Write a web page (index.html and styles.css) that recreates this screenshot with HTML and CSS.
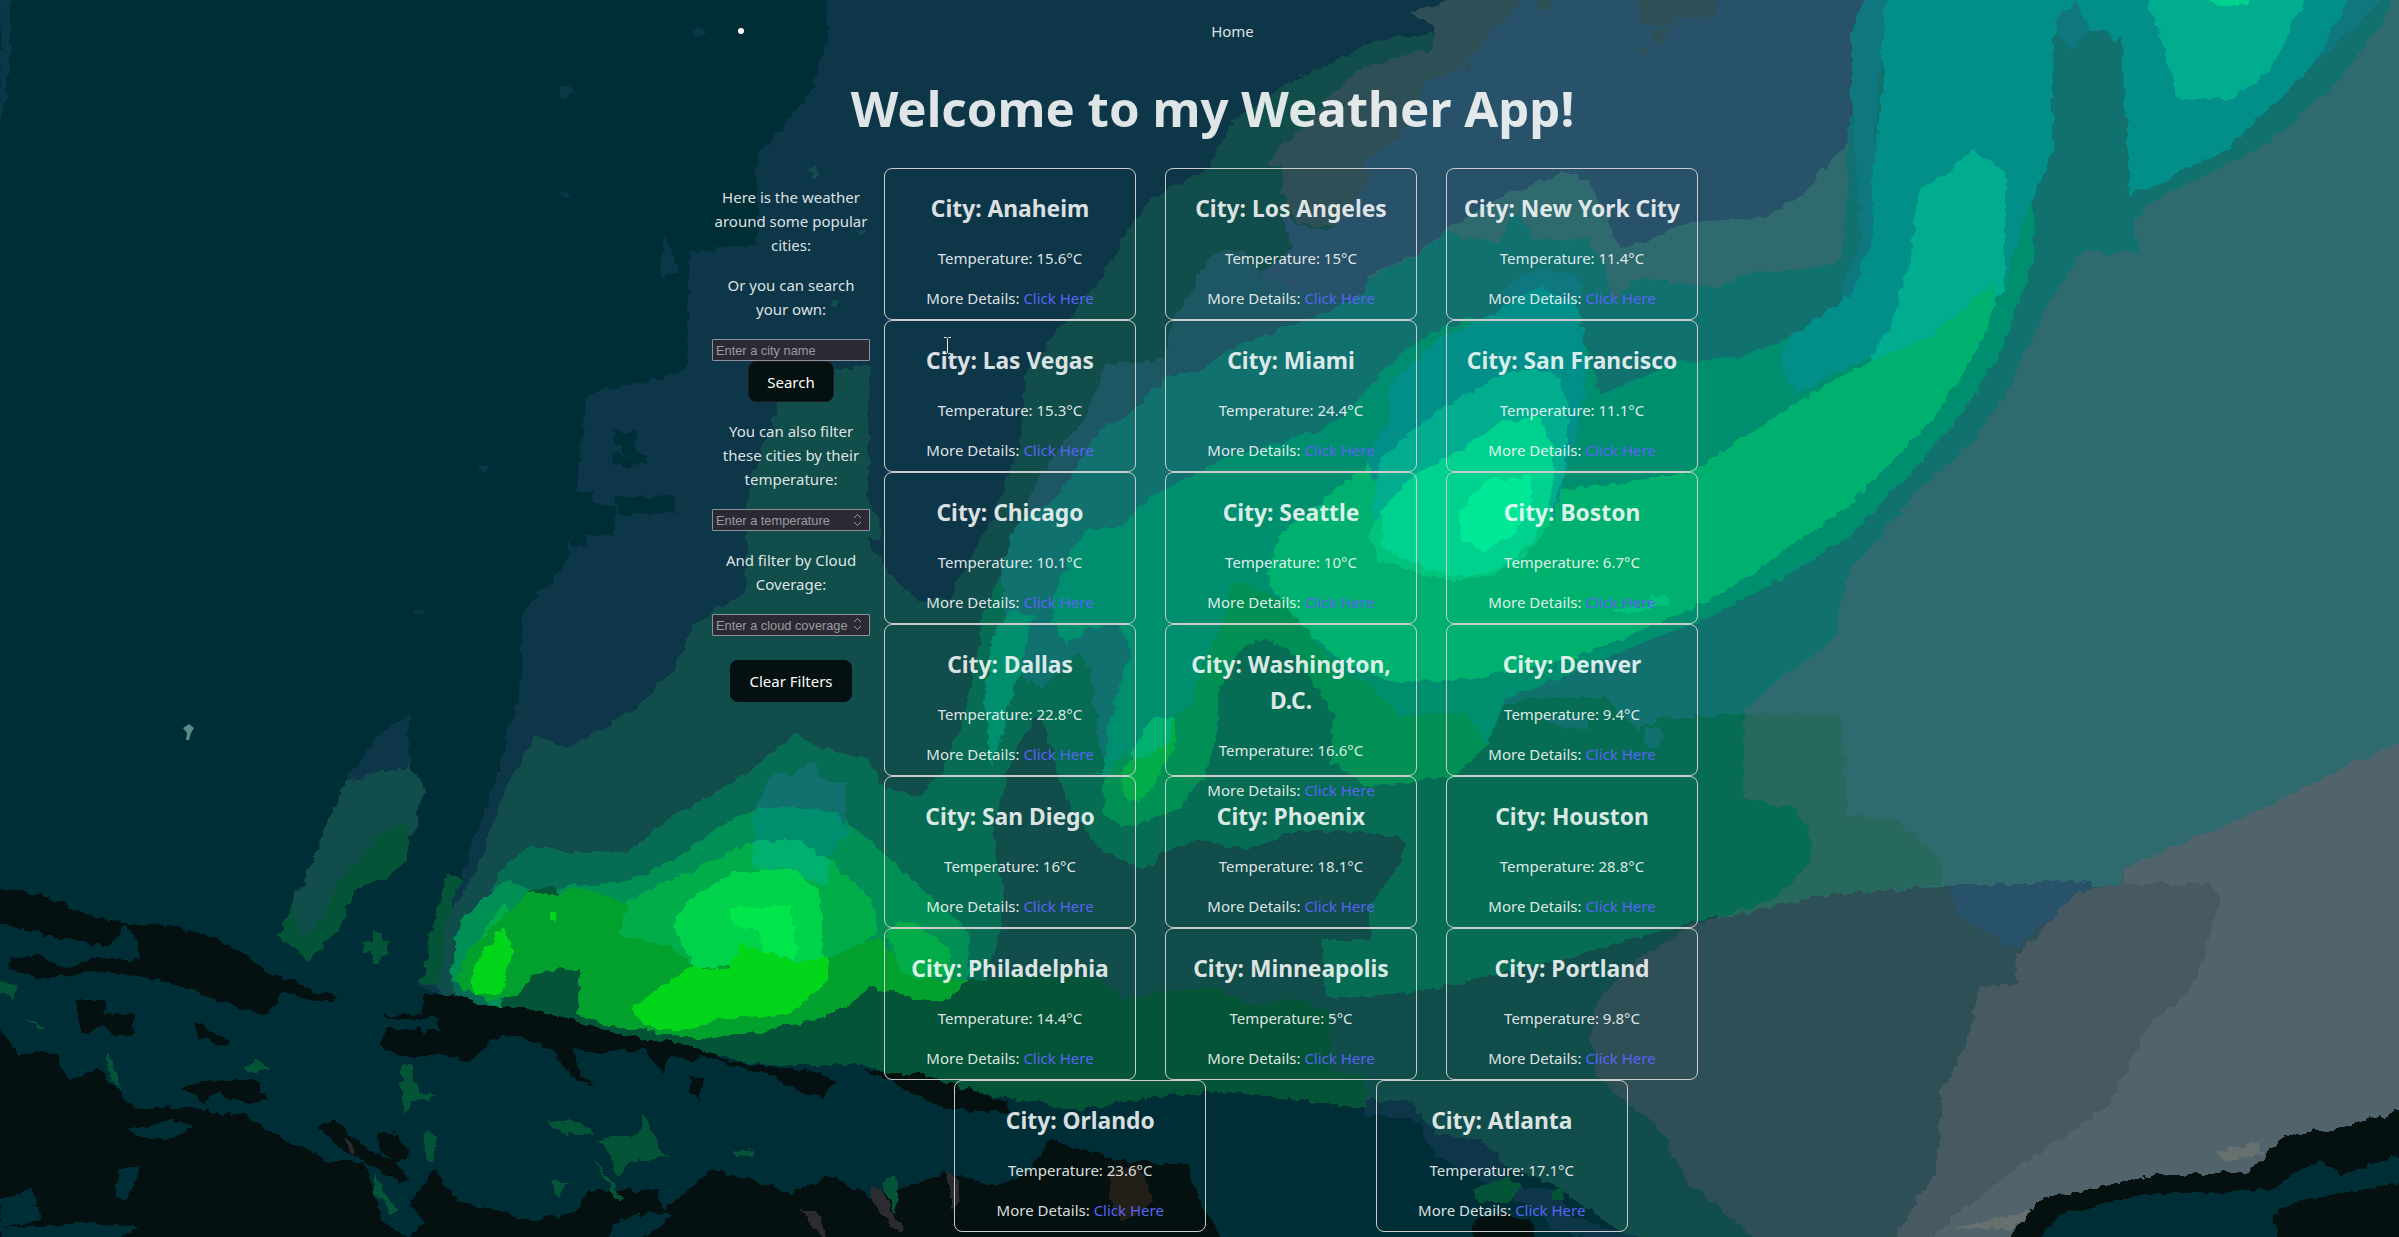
FILE: index.html
```html
<!DOCTYPE html>
<html lang="en">
<head>
<meta charset="utf-8">
<title>Weather App</title>
<link rel="stylesheet" href="styles.css">
</head>
<body>
<svg class="aurora" viewBox="0 0 2399 1237" preserveAspectRatio="none" aria-hidden="true">
  <defs>
    <filter id="rough" filterUnits="userSpaceOnUse" x="-20" y="-20" width="2440" height="1280" color-interpolation-filters="sRGB">
      <feTurbulence type="fractalNoise" baseFrequency="0.09" numOctaves="2" seed="4"/>
      <feDisplacementMap in="SourceGraphic" scale="10" xChannelSelector="R" yChannelSelector="G"/>
    </filter>
  </defs>
  <g filter="url(#rough)" shape-rendering="crispEdges">
    <rect class="c-night" x="-20" y="-20" width="2440" height="1280"/>
    <!-- night sky -->
    <path class="c-navy" d="M830-20L824 50 814 87 757 158V245L689 252 687 371 587 394 580 458 568 560 522 615V678L496 781 461 876 438 939 419 986 600 1260H2420V-20Z"/>
    <path class="c-navy" d="M0 0h10v60l-8 60h-2zM698 32m-6 0a6 6 0 1 0 12 0a6 6 0 1 0-12 0M565 92m-6 0a6 6 0 1 0 12 0a6 6 0 1 0-12 0M564 193m-5 0a5 5 0 1 0 10 0M420 610m-5 0a5 5 0 1 0 10 0M484 465m-5 0a5 5 0 1 0 10 0M344 785l30-45 35-25v90l-40 5-45 60zM660 270l5-38 15 40-20 4z"/>
    <path class="c-night" d="M615 432h20v12h-20zM612 455h36v10h-36zM572 490h22v14h20v32h-28v10h-14zM616 496h60v18h-60zM622 444h14v10h-14z"/>
    <!-- outer veil -->
    <path class="c-pine" d="M870 365L790 372 770 430 748 490 746 592 696 623 673 670 635 710 566 749 536 734 505 789 474 876 448 915 429 978 600 1200H1700V-20L1435 30 1360 43 1320 67 1290 83 1230 123 1210 167 1153 197 1127 230 1103 277 1073 313 1047 343 1027 370 1020 443 992 520 963 570 950 597 920 602 907 593 884 567 880 520 868 500Z"/>
    <path class="c-navy" d="M868 478l18-6v18l-16 6zM868 537l14 4v14l-12-2zM1435 33L1380 38 1320 68V-20H1450Z"/>
    <path class="c-pine" d="M344 782L408 765 424 786 415 830 389 864 357 888 338 929 309 960 277 935 293 905 319 847ZM809 168h7l-2 12zM858 229a4 4 0 1 0 8 0zM832 300h8v8h-8z"/>
    <path class="c-forest" d="M408 825V860L385 880 357 888 338 929 309 960 277 935 293 905 300 935 315 930 340 880 385 830ZM448 870L430 940 420 985 440 985 445 930 460 880ZM372 932h8v8h8v14h-8v10h-8v-12h-8v-10h8z"/>
    <path class="c-slate-gray" d="M1447-20V0L1410 13 1435 27 1433 48 1410 53 1355 70 1337 90 1300 130 1265 163 1283 167V193L1297 225 1337 225 1700 225V-20Z"/>
    <path class="c-slate" d="M1535-20L1513 10 1487 37 1453 73 1427 80 1400 137 1360 163 1373 177 1350 207 1333 227H1300L1280 213 1293 247 1263 273 1300 400H1900V-20Z"/>
    <path class="c-slate-gray" d="M1638-20V25H1675V17H1715L1727-20ZM1650 30h17v12h-15zM1639 47h7v8h-7zM1465 65h8v6h-8zM1482 68h5v4zM1534-20h16v28h-14z"/>
    <path class="c-steel" d="M1242 250H1217L1197 275V285L1177 313 1163 360 1107 363 1087 413 1040 473 1023 515 1100 560 1420 380 1350 300 1290 290 1262 275Z"/>
    <path class="c-sea" d="M1820 170L1807 190 1767 217 1683 223 1650 240 1620 248 1607 220 1587 180 1563 172 1527 187 1500 197 1460 220 1417 253 1367 277 1500 500V1260H2420V-20H2300L1860 130Z"/>
    <path class="c-teal" d="M1053 500L1013 527 1007 553 993 600 985 650 1110 770 1200 780 1743 730V710L1773 686 1835 639 1850 568 1873 544 1919 489 1972 442 2010 387 2041 316 2087 245 2110 256 2148 205 2217 170 2270 142 2332 87 2385 20 2399-20H1873L1850 118 1842 260 1820 267 1747 273 1717 287 1640 278 1613 300 1603 267 1587 240H1533L1517 213 1503 227 1501 243 1467 240 1447 230 1420 253 1370 277 1363 293 1327 313 1277 330 1233 347 1200 370 1165 377 1133 410 1097 433 1067 483Z"/>
    <!-- broad green curtain -->
    <path class="c-moss" d="M1503 707L1530 697H1606L1637 730 1664 718 1744 714V798L1797 810 1813 844 1809 864 1775 898 1721 917 1644 936 1568 959 1445 986 1400 994 1327 998 1321 940H1369V906L1403 860V837L1350 831H1293L1247 850 1197 840 1163 853 1153 867H1137L1103 850 1077 820 1063 790 1045 725 1036 715 1020 740 1003 787 992 833 1003 893 1000 933 983 983 960 1020 800 1060H560L452 990 459 947 497 876 528 844 559 852 628 852 666 820 735 781 796 734 820 747 870 760 883 787 920 797 940 773 960 730 973 683 983 617 1000 577 1012 640 1040 690 1080 650 1095 680 1140 800 1220 700H1500Z"/>
    <path class="c-teal" d="M1005 580L1060 600 1087 632 1120 618 1132 640 1120 680 1105 770 1098 740 1090 660 1080 645 1060 662 1030 680 1005 660ZM1642 735l10-10 14 8-6 14h-12zM1540 715l20 12h30l-4-10z"/>
    <path class="c-pine" d="M1250 938H1321V960L1327 998 1400 994 1445 986 1568 959 1644 936 1720 915 1760 1260H1500L1420 1150H1300L1250 1000Z"/>
    <path class="c-fern" d="M1744 714H1841L1847 814 1896 820 1942 860V884L1812 899 1721 917 1775 898 1809 864 1813 844 1797 810 1744 798Z"/>
    <path class="c-slate-gray" d="M1697 923L1812 897 1965 884 2120 887 2420 870V1260H1781L1689 1183 1659 1128 1621 1097 1598 1078 1591 1036 1598 1001 1637 959Z"/>
    <path class="c-slate" d="M1949 887L2095 880 2090 905 2041 925 2018 950 1957 915Z"/>
    <path class="c-stone" d="M2420 735L2347 765 2271 805 2217 828 2125 868 2121 884 2079 891 2018 955V985L1980 986 1965 1049 1942 1089 1938 1168 1880 1260H2420Z"/>
    <path class="c-ash" d="M2420 735L2347 765 2271 805 2217 828 2125 868V884H2209L2220 900 2194 986 2148 1026 2110 1104 2018 1168 1900 1260H2420Z"/>
    <path class="c-jade" d="M1053 600L1073 550 1087 528 1120 527 1147 500 1183 480 1227 457 1280 443 1320 430 1340 417 1367 390 1397 357 1430 333 1473 317 1587 347 1600 393 1637 380 1673 363 1740 357 1780 343 1820 320 1873 347 2003 284 2011 158 2034 213V260L2003 347 1965 410 1911 473 1850 536 1773 584 1697 623 1644 642 1576 672 1507 699 1488 745 1400 760 1230 720 1170 740 1120 780 1100 777 1113 707 1132 650 1117 623 1087 630 1067 645 1053 623ZM993 633L1010 610 1033 617 1020 667 1003 733 990 767 985 700Z"/>
    <path class="c-cyan" d="M1873-20L1884 79 1865 237 1842 300 1789 339 1780 365 1796 394 1860 360 1934 335 2003 292 2020 230 2053 150V40L2070 10 2095 40 2122 40 2129 197 2225 150 2309 71 2372-20Z"/>
    <path class="c-teal" d="M2053 60L2068 30H2105L2122 50 2126 200 2140 252H2087L2053 197Z"/>
    <path class="c-lagoon" d="M1870-20L1850 40 1852 110 1862 240 1842 290 1850 300 1870 245 1878 90 1888-20ZM2055 20l20-20 14 30-20 20zM2309 71L2399-20H2360ZM1876 448h16v14l-12 6-8-10z"/>
    <path class="c-mint" d="M1972 150L2007 174 2003 292 1934 335 1888 379 1870 355 1888 331 1911 260 1919 189 1950 170ZM2142-20L2179 99H2232L2271 71 2315-20Z"/>
    <path class="c-spring" d="M2208-20h40v26h-36z"/>
    <path class="c-emerald" d="M1280 536L1338 489 1376 458 1567 489 1689 473 1773 418 1850 371 1934 335 1995 280 1988 331 1934 418 1850 505 1773 560 1697 607 1582 655 1483 678 1391 682 1340 660 1300 623 1280 600 1267 573Z"/>
    <path class="c-leaf" d="M1233 580L1277 597 1317 643 1340 670 1369 684 1396 714H1468L1488 745 1453 776 1369 787 1334 764 1207 777 1173 813 1120 828 1103 810V780L1120 760 1170 720 1193 700 1210 647 1227 613Z"/>
    <path class="c-moss" d="M1243 647L1265 640 1287 647 1317 687 1333 713 1330 767 1350 785 1203 785 1215 740 1220 687Z"/>
    <path class="c-grass" d="M1123 767L1153 730 1175 717V740L1153 790 1137 803 1122 793Z"/>
    <path class="c-emerald" d="M1130 755L1153 717H1173L1170 740 1147 758Z"/>
    <!-- bright core -->
    <path class="c-cyan" d="M1443 337L1500 310 1540 280H1560L1577 300 1583 333 1587 377 1577 433 1563 483 1553 520 1400 520 1370 470V450L1390 420V383Z"/>
    <path class="c-mint" d="M1380 460L1413 430 1460 397 1513 370H1553L1567 400V460L1550 520 1500 545 1372 520Z"/>
    <path class="c-spring-dim" d="M1369 538L1380 510 1413 477 1553 483 1548 525 1530 555 1499 573 1453 582 1380 561Z"/>
    <path class="c-spring" d="M1380 510L1413 477 1460 450 1500 423 1540 417 1553 450V483L1545 519 1530 546 1499 569 1461 577 1430 569 1384 550Z"/>
    <path class="c-core" d="M1457 513L1487 480 1530 477 1533 500 1518 531 1484 552 1461 538Z"/>
    <path class="c-spring-dim" d="M1615 608l35-2v-10h20v8l-35 8h-20z"/>
    <path class="c-lagoon" d="M1503 290l30-22 44 8 6 16-12 10-30-15-30 12z"/>
    <!-- low glow over the ridge -->
    <path class="c-leaf" d="M450 980L459 923 490 890 510 880 536 892 574 885 625 882 676 858 714 830 753 810 797 806 836 813 880 851 925 892 967 927 970 950 967 980 930 1000 700 1050 560 1040Z"/>
    <path class="c-teal" d="M772 772L790 775 812 762 822 780 845 782V830L800 805 755 812Z"/>
    <path class="c-jade" d="M753 810L797 806 836 813 850 832 825 860 790 840 755 842Z"/>
    <path class="c-forest" d="M529 892L555 885 580 960 700 1000 880 980 983 980 1007 975 1100 978 1120 1000 1163 993 1213 987 1253 1007 1300 998 1331 1013V1070L1365 1074V1120H900L606 1035 500 1005 520 950Z"/>
    <path class="c-grass" d="M619 905L682 875 753 842 797 839 829 861 874 902 877 933 829 970 670 970 619 936ZM480 935L504 902 513 930 480 970Z"/>
    <path class="c-emerald" d="M753 842L797 839 829 861 825 885 790 870 755 870Z"/>
    <path class="c-green" d="M466 953L500 920 529 893 555 895 577 888 628 904 619 933 670 947 695 965 829 957 880 936 899 964 937 980H967L953 997 933 1003 870 987 847 1007 820 1018 765 1032 695 1039 606 1025 577 1015 580 971 561 969 529 977 520 995 485 1001 456 984Z"/>
    <path class="c-grass" d="M887 933L900 920 920 927 950 950 953 975 920 978 900 972Z"/>
    <path class="c-neon" d="M695 968L673 926 689 899 733 873 797 870 820 892 824 960Z"/>
    <path class="c-neon-hot" d="M730 909L791 904 797 959 765 953 759 929 733 926Z"/>
    <path class="c-lime" d="M692 967L727 969 743 943 765 953 797 961 828 957V981L791 1013 721 1019 689 1029H647L631 1008ZM472 967L504 926 513 950 501 995H472ZM551 912h6v10h-6z"/>
    <!-- mountains -->
    <path class="c-night" d="M-20 900L230 950 330 985 417 986 470 1005 530 1010 620 1035 765 1065H860L1008 1098 1079 1110 1162 1096 1227 1092 1300 1100 1365 1108 1415 1118 1436 1156 1500 1165 1552 1183 1660 1260H-20Z"/>
    <path class="c-navy" d="M1365 1100L1410 1102 1430 1125 1436 1134 1480 1140 1502 1158 1505 1185 1560 1190 1568 1215 1660 1245 1700 1260H1640L1560 1230 1500 1190 1436 1156 1415 1118 1365 1115Z"/>
    <path class="c-forest" d="M1470 1190l40-12 12 8-14 18-34-4zM1550 1190h14v10h-14z"/>
    <path class="c-soil" d="M-20 889L25 891 60 903 99 919 130 924 168 925 205 935 240 950 268 972 300 985 342 1000 315 1002 285 992 268 1014 242 1010 205 995 170 982 130 975 96 969 64 976 38 979 8 969 12 957 38 956 66 968 96 958 140 960V940L125 926 112 944 92 944 57 936 6 926-20 924Z"/>
    <path class="c-soil" d="M75 1000h30v14h28v22h-20l-6-10-24 10zM424 995L453 993 485 1005 523 1007 574 1021 619 1034 689 1045 721 1058 765 1067 805 1070 835 1080 825 1098 800 1092 775 1077 735 1067 718 1060 700 1056 692 1060 670 1056 662 1072 645 1050 620 1050 600 1054 574 1048 578 1070 592 1086 568 1077 555 1050 510 1034 490 1040 470 1062 450 1055 400 1056 380 1044 385 1029 420 1028 415 1020 376 1017 421 1014ZM864 1069L931 1077 1008 1102 1010 1114 940 1107ZM180 1089L205 1080 255 1082 268 1099 250 1106 235 1098 215 1108 200 1100ZM690 1075l14 4-4 22-10-8zM196 1022l14 8 18 12-8 4-22-10z"/>
    <path class="c-soil" d="M-20 1025L0 1029 19 1054 57 1053 70 1082 96 1066 134 1108H204L242 1114 287 1142 332 1162H363L383 1197 408 1207 434 1169 459 1203 497 1210 529 1221 574 1214 587 1190 657 1190 663 1210 714 1169 791 1193 829 1176 874 1200 944 1173 995 1186 1030 1170 1050 1140 1118 1160 1189 1165 1200 1201 1235 1260H-20ZM315 1125L335 1120 360 1145 395 1162 410 1178 400 1182 370 1165 340 1148ZM378 1133l22 2 8 20-12 8-16-12z"/>
    <path class="c-night" d="M130 1128l40-8 22 6-20 14-35-2zM120 1170l20-4-12 35-14-6zM0 1200l32-12 8 32-40 8zM0 1228l80-6 60 6-20 10-120 4zM610 1225l40-14 22 5-40 30h-20zM205 1100l14-8 14 10-8 14-16-4zM365 1165l20 10 30 34 10 14-16 14-24-12-14-40zM415 1020l20-5 8 12-20 6z"/>
    <path class="c-forest" d="M400 1070l12-8 4 26 20 10-24 2-8 18zM545 1120l35 2 16 12h-30zM598 1140l40-5 6-22 14 30 10 14-40 6-10 14-6-20zM104 1052l10 10 6 28-10-14zM425 1130l14 8-6 22-8-4zM243 1068l12-8 16 10-16 2zM375 1175l12 20 12 15-8 4-18-25zM593 1155l30 45-8-2zM550 1182h16l-6 18zM735 1150h18v6h-18zM0 980l18 6-4 12-14-4zM883 1180l12-5 3 25-4 14-6-20zM22 1013l22 16-8-2z"/>
    <path class="c-plum" d="M870 1185l14 4 8 24 14 16-6 4-28-28zM945 1172l12 6 4 22-8 10zM800 1208l18 5 12 30-20-18zM342 1132l14 18-4 4z"/>
    <path class="c-umber" d="M1110 1170l30-5 14 36-30 22-15-24z"/>
    <path class="c-rock" d="M1970 1225l80-20-40 25h-60zM2215 1152l42-10 6 10-34 12z"/>
    <path class="c-soil" d="M1480 1260L1470 1222 1500 1212 1530 1220 1545 1260ZM2000 1250L2041 1199 2156 1175 2248 1171 2286 1136 2339 1128 2420 1105V1260Z"/>
    <path class="c-night" d="M2060 1215L2140 1195 2270 1190 2320 1160 2340 1175 2420 1150V1180L2300 1200 2270 1215 2290 1260H2020Z"/>
  </g>
  <path class="c-star" d="M183 728l6-4 5 4-3 5-2 7h-3l1-7z"/>
</svg>

<svg class="ibeam" viewBox="0 0 9 17" aria-hidden="true"><path d="M1 .5h2.500l1 1 1-1H8M4.500 1.500v14M1 16.500h2.500l1-1 1 1H8"/></svg>

<div class="app">
  <nav><ul><li><a class="nav-link" href="#">Home</a></li></ul></nav>
  <h1>Welcome to my Weather App!</h1>
  <div class="layout">
    <aside>
      <p>Here is the weather around some popular cities:</p>
      <p>Or you can search your own:</p>
      <div class="field"><input type="text" placeholder="Enter a city name"></div>
      <button class="outlined">Search</button>
      <p>You can also filter these cities by their temperature:</p>
      <div class="field"><input type="text" placeholder="Enter a temperature"><svg class="spin" viewBox="0 0 9 12"><path d="M1 4l3.500-3.500L8 4M1 8l3.500 3.500L8 8"/></svg></div>
      <p>And filter by Cloud Coverage:</p>
      <div class="field"><input type="text" placeholder="Enter a cloud coverage"><svg class="spin high" viewBox="0 0 9 12"><path d="M1 4l3.500-3.500L8 4M1 8l3.500 3.500L8 8"/></svg></div>
      <button class="clear">Clear Filters</button>
    </aside>
    <main>
      <section class="card"><h2>City: Anaheim</h2><p>Temperature: 15.6°C</p><p>More Details: <a href="#">Click Here</a></p></section>
      <section class="card"><h2>City: Los Angeles</h2><p>Temperature: 15°C</p><p>More Details: <a href="#">Click Here</a></p></section>
      <section class="card"><h2>City: New York City</h2><p>Temperature: 11.4°C</p><p>More Details: <a href="#">Click Here</a></p></section>
      <section class="card"><h2>City: Las Vegas</h2><p>Temperature: 15.3°C</p><p>More Details: <a href="#">Click Here</a></p></section>
      <section class="card"><h2>City: Miami</h2><p>Temperature: 24.4°C</p><p>More Details: <a href="#">Click Here</a></p></section>
      <section class="card"><h2>City: San Francisco</h2><p>Temperature: 11.1°C</p><p>More Details: <a href="#">Click Here</a></p></section>
      <section class="card"><h2>City: Chicago</h2><p>Temperature: 10.1°C</p><p>More Details: <a href="#">Click Here</a></p></section>
      <section class="card"><h2>City: Seattle</h2><p>Temperature: 10°C</p><p>More Details: <a href="#">Click Here</a></p></section>
      <section class="card"><h2>City: Boston</h2><p>Temperature: 6.7°C</p><p>More Details: <a href="#">Click Here</a></p></section>
      <section class="card"><h2>City: Dallas</h2><p>Temperature: 22.8°C</p><p>More Details: <a href="#">Click Here</a></p></section>
      <section class="card"><h2>City: Washington, D.C.</h2><p>Temperature: 16.6°C</p><p>More Details: <a href="#">Click Here</a></p></section>
      <section class="card"><h2>City: Denver</h2><p>Temperature: 9.4°C</p><p>More Details: <a href="#">Click Here</a></p></section>
      <section class="card"><h2>City: San Diego</h2><p>Temperature: 16°C</p><p>More Details: <a href="#">Click Here</a></p></section>
      <section class="card"><h2>City: Phoenix</h2><p>Temperature: 18.1°C</p><p>More Details: <a href="#">Click Here</a></p></section>
      <section class="card"><h2>City: Houston</h2><p>Temperature: 28.8°C</p><p>More Details: <a href="#">Click Here</a></p></section>
      <section class="card"><h2>City: Philadelphia</h2><p>Temperature: 14.4°C</p><p>More Details: <a href="#">Click Here</a></p></section>
      <section class="card"><h2>City: Minneapolis</h2><p>Temperature: 5°C</p><p>More Details: <a href="#">Click Here</a></p></section>
      <section class="card"><h2>City: Portland</h2><p>Temperature: 9.8°C</p><p>More Details: <a href="#">Click Here</a></p></section>
      <section class="card"><h2>City: Orlando</h2><p>Temperature: 23.6°C</p><p>More Details: <a href="#">Click Here</a></p></section>
      <section class="card"><h2>City: Atlanta</h2><p>Temperature: 17.1°C</p><p>More Details: <a href="#">Click Here</a></p></section>
    </main>
  </div>
</div>
</body>
</html>
```
FILE: styles.css
```css
* { box-sizing: border-box; }

body {
  margin: 0;
  height: 1237px;
  overflow: hidden;
  background: #002e37;
  color: rgba(255, 255, 255, 0.87);
  font: 15px/24px "Noto Sans", "Open Sans", sans-serif;
}

.aurora {
  position: absolute;
  inset: 0;
  width: 2399px;
  height: 1237px;
  z-index: -1;
}

.c-night { fill: #002e37; }
.c-navy { fill: #0d3748; }
.c-pine { fill: #114d4b; }
.c-forest { fill: #045437; }
.c-slate-gray { fill: #2f4f57; }
.c-slate { fill: #285269; }
.c-steel { fill: #1c5763; }
.c-sea { fill: #2e6a6e; }
.c-teal { fill: #10716e; }
.c-moss { fill: #066c53; }
.c-fern { fill: #28695e; }
.c-stone { fill: #485a61; }
.c-ash { fill: #51646b; }
.c-jade { fill: #008f6e; }
.c-cyan { fill: #028e89; }
.c-lagoon { fill: #0f7780; }
.c-mint { fill: #00ad8e; }
.c-emerald { fill: #00b06e; }
.c-leaf { fill: #008f55; }
.c-grass { fill: #00ad49; }
.c-green { fill: #02a12d; }
.c-spring { fill: #00d18e; }
.c-spring-dim { fill: #00c47b; }
.c-core { fill: #00e896; }
.c-neon { fill: #00d24c; }
.c-neon-hot { fill: #00e64b; }
.c-lime { fill: #02d61a; }
.c-soil { fill: #051110; }
.c-plum { fill: #2d2b32; }
.c-umber { fill: #211f17; }
.c-rock { fill: #66706f; }
.c-star { fill: #5d8a8b; }

.ibeam {
  position: absolute;
  left: 943px;
  top: 337px;
  width: 9px;
  height: 17px;
  fill: none;
  stroke: #e8e8e8;
}

.app {
  width: 1001px;
  margin-left: 712px;
  padding-top: 3px;
}

nav ul { margin: 16px 0; padding-left: 40px; text-align: center; }
nav ul { list-style: none; }
nav li { display: flex; align-items: center; }
nav li::before {
  content: "";
  width: 6px;
  height: 6px;
  margin-left: -14px;
  border-radius: 50%;
  background: #fff;
}
.nav-link { flex: 1; margin-left: 8px; color: inherit; }

a { color: #5864f4; text-decoration: none; }

h1 {
  margin: 37px 0 32px;
  font-size: 49.2px;
  line-height: 56px;
  text-align: center;
}

.layout { display: flex; align-items: flex-start; }

aside {
  width: 158px;
  display: flex;
  flex-direction: column;
  align-items: center;
  text-align: center;
}

aside p { margin: 16px 0 0; }
aside p:first-child { margin-top: 17px; }

.field { position: relative; width: 158px; height: 22px; margin: 18px 0 0; }
.field + p { margin-top: 17px; }

input {
  display: block;
  width: 100%;
  height: 22px;
  padding: 1px 3px;
  border: 1px solid #8f8f9d;
  border-radius: 1px;
  background: #2b2a33;
  color: #fff;
  font: 12.8px "Liberation Sans", Arial, sans-serif;
}

input::placeholder { color: #9b9aa2; opacity: 1; }

.spin {
  position: absolute;
  right: 8px;
  top: 5px;
  width: 9px;
  height: 12px;
  fill: none;
  stroke: #a0a0ab;
}
.spin.high { top: 4px; }

button {
  padding: 0 18.5px;
  height: 41px;
  border: 1px solid transparent;
  border-radius: 8px;
  background: #051110;
  color: #fff;
  font: 400 15px/24px "Noto Sans", "Open Sans", sans-serif;
}

.outlined { border-color: #1c1c20; }
.outlined + p { margin-top: 17px; }
.clear { margin-top: 24px; height: 42px; }

main {
  width: 843px;
  display: flex;
  flex-wrap: wrap;
  justify-content: space-around;
}

.card {
  width: 252px;
  height: 152px;
  margin-left: -0.5px;
  margin-right: 0.5px;
  border: 1px solid #ccc;
  border-radius: 8px;
  text-align: center;
}

.card h2 {
  margin: 22px 0 19px;
  padding: 0 10px;
  font-size: 22.8px;
  line-height: 36px;
}

.card p { margin: 16px 0; }
```
